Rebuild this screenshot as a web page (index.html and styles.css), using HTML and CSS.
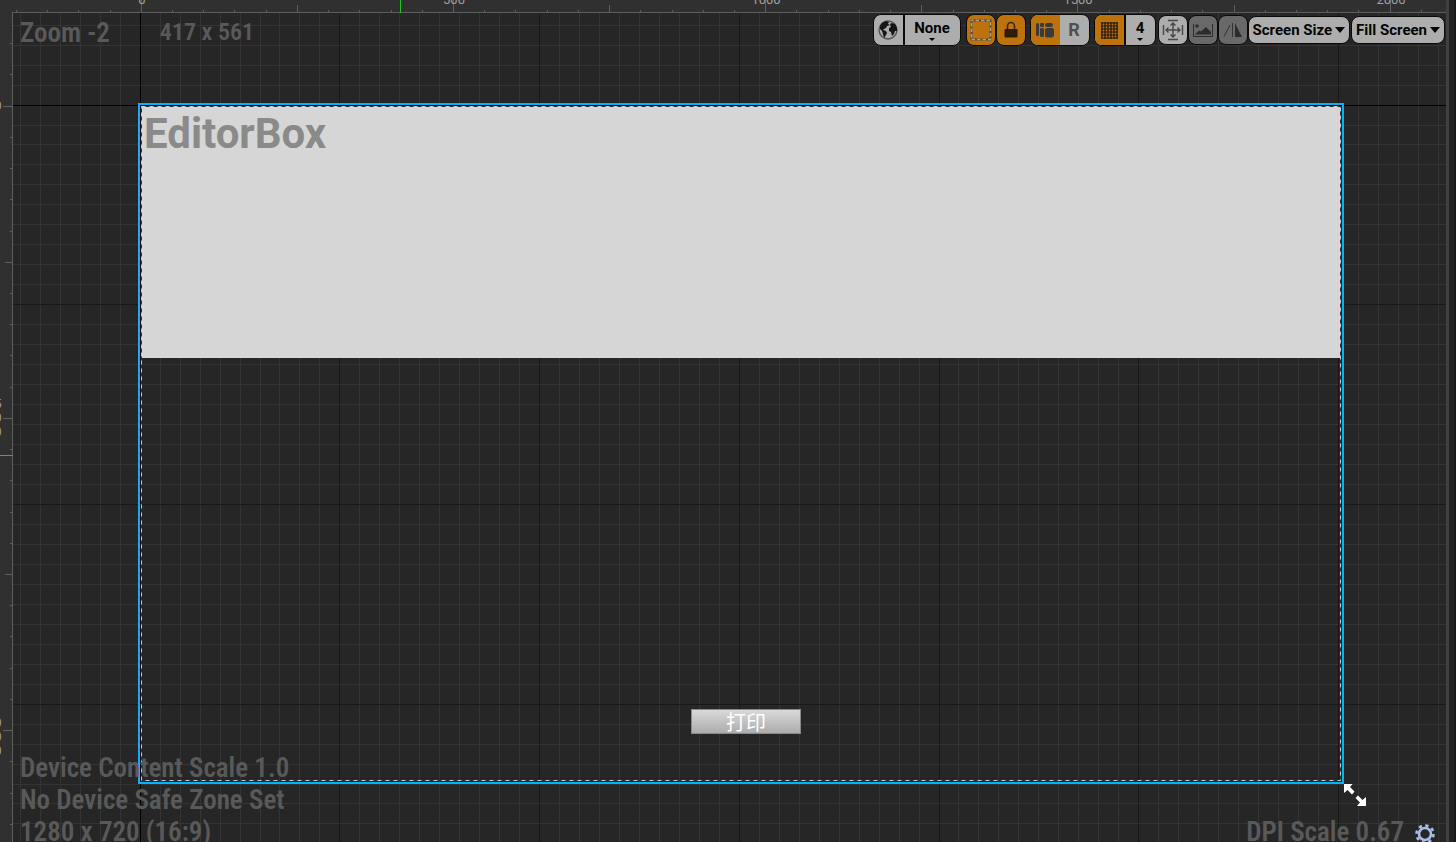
FILE: index.html
```html
<!DOCTYPE html>
<html lang="en">
<head>
<meta charset="utf-8">
<title>Widget Designer</title>
<link rel="stylesheet" href="styles.css">
</head>
<body>
<div class="designer">
  <svg class="ruler ruler-top" id="ruler-top" aria-hidden="true"></svg>
  <svg class="ruler ruler-left" id="ruler-left" aria-hidden="true"></svg>
  <main class="stage">
    <svg class="grid" id="grid" aria-hidden="true"></svg>

    <section class="widget">
      <div class="editor-box">EditorBox</div>
      <div class="action-row"><button class="print" type="button" lang="zh">打印</button></div>
      <svg class="dash" aria-hidden="true"><rect class="dash-base" x="0.500" y="0.500"/><rect class="dash-line" x="0.500" y="0.500"/></svg>
    </section>

    <header class="topbar">
      <div class="readouts"><span class="zoom">Zoom -2</span><span class="coords">417 x 561</span></div>
      <nav class="tools">
        <div class="group">
          <button class="cell" type="button" aria-label="Localization">
            <svg width="20" height="20" viewBox="0 0 20 20"><circle cx="10" cy="10" r="9" fill="#aaa" stroke="#555" stroke-width="1.400"/><path fill="#151515" d="M2 6L4 3L8 1L11 2L10 4L12 5L9 6L8 8L6 9L5 10L8 11L9 13L8 15L6 18L5 14L4 11L2 9zM13 3L17 4L19 8L19 11L17 11L16 14L14 16L13 12L11 11L11 8L13 7L12 5z"/></svg>
          </button>
          <button class="cell none" type="button"><span>None</span><i class="tiny"></i></button>
        </div>
        <button class="tool on" type="button" aria-label="Outlines">
          <svg width="22" height="22" viewBox="0 0 22 22"><path d="M1.500 1.500H20.500V20.500H1.500z" fill="none" stroke="#50493c" stroke-width="2"/><path d="M1.500 1.500H20.500V20.500H1.500z" fill="none" stroke="#a8a091" stroke-width="1.500" stroke-dasharray="3.500 2" stroke-dashoffset="1.500"/></svg>
        </button>
        <button class="tool on" type="button" aria-label="Respect locks">
          <svg width="14" height="18" viewBox="0 0 14 18"><path d="M3.500 9V5a3.500 3.500 0 0 1 7 0V9" fill="none" stroke="#3b2808" stroke-width="1.600"/><rect x="0.500" y="8" width="13" height="8.500" rx="1" fill="#2b1d08"/></svg>
        </button>
        <div class="group">
          <button class="cell on" type="button" aria-label="Flow layout">
            <svg width="20" height="18" viewBox="0 0 20 18" fill="#3c3a37"><rect x="1" y="2" width="3" height="13" rx="1.500"/><rect x="5" y="2" width="4" height="4" rx="1"/><rect x="5" y="7" width="4" height="9" rx="1"/><rect x="10" y="2" width="8" height="4" rx="2"/><rect x="10" y="7" width="9" height="9.500" rx="2"/></svg>
          </button>
          <button class="cell r" type="button">R</button>
        </div>
        <div class="group">
          <button class="cell on" type="button" aria-label="Grid snap">
            <svg width="17" height="17" viewBox="0 0 17 17"><path d="M1 0V17M4 0V17M7 0V17M10 0V17M13 0V17M16 0V17M0 1H17M0 4H17M0 7H17M0 10H17M0 13H17M0 16H17" stroke="#1e1404" stroke-width="1.200"/></svg>
          </button>
          <button class="cell four" type="button"><span>4</span><i class="tiny"></i></button>
        </div>
        <div class="views">
          <button class="tool small" type="button" aria-label="Zoom to fit">
            <svg width="22" height="22" viewBox="0 0 22 22" fill="none" stroke="#484848" stroke-width="1.400"><path d="M6 1.500H16M6 20.500H16M1.500 6V16M20.500 6V16M11 4V18M4 11H18M8.500 6.500L11 4L13.500 6.500M8.500 15.500L11 18L13.500 15.500M6.500 8.500L4 11L6.500 13.500M15.500 8.500L18 11L15.500 13.500"/></svg>
          </button>
          <button class="tool small dim" type="button" aria-label="Preview background">
            <svg width="20" height="16" viewBox="0 0 20 16"><path d="M0.500 2V14.500M19.500 2V14.500M0 14.500H20" stroke="#2c2c2c" fill="none"/><circle cx="4" cy="4" r="1.800" fill="#2c2c2c"/><path d="M2 12.500L6 8.500L8 9.500L13 5L18 10V12.500z" fill="#2c2c2c"/></svg>
          </button>
          <button class="tool small dim" type="button" aria-label="Flip">
            <svg width="20" height="16" viewBox="0 0 20 16"><path d="M1 14.500L7 3M9.500 1V15" stroke="#333" fill="none"/><path d="M12 1L19 15H12z" fill="#2c2c2c"/></svg>
          </button>
        </div>
        <button class="menu" type="button">Screen Size<i class="caret"></i></button>
        <button class="menu" type="button">Fill Screen<i class="caret"></i></button>
      </nav>
    </header>

    <div class="info"><span>Device Content Scale 1.0</span><span>No Device Safe Zone Set</span><span>1280 x 720 (16:9)</span></div>
    <div class="dpi"><span>DPI Scale 0.67</span>
      <button class="gear" type="button" aria-label="DPI settings"><svg width="20" height="20" viewBox="0 0 20 20"><circle cx="10" cy="10" r="8.500" fill="none" stroke="#a9bbe8" stroke-width="2.600" stroke-dasharray="3.300 3.376"/><circle cx="10" cy="10" r="6" fill="none" stroke="#a9bbe8" stroke-width="2.600"/></svg></button>
    </div>
    <svg class="resize" width="22" height="22" viewBox="0 0 22 22" aria-hidden="true"><path fill="#fff" d="M0 0H8.500L6 3L10.500 7.500L8 10.500L3.500 6L0 9zM14 11.500L18.500 16L22 13V22H13L16 18.500L11.500 14z"/></svg>
  </main>
  <div class="scroll"></div>
</div>
<script src="designer.js"></script>
</body>
</html>
```
FILE: styles.css
```css
* { box-sizing: border-box; }
body { margin: 0; background: #212121; font-family: Roboto, sans-serif; overflow: hidden; }
button { font: inherit; color: inherit; border: 0; padding: 0; margin: 0; background: none; }
svg { display: block; }
.designer { display: grid; grid-template: 13px 1fr / 13px 1fr 10px; height: 100vh; }
.ruler { background: #303030; overflow: hidden; width: 100%; height: 100%; font-size: 13px; fill: #a0a0a0; text-anchor: middle; shape-rendering: crispEdges; }
.ruler-top { grid-column: 1 / 3; grid-row: 1; }
.ruler-left { grid-column: 1; grid-row: 2; }
.scroll { grid-column: 3; grid-row: 1 / 3; border-left: 3px solid #404040; border-right: 2px solid #191919; background: #212121; }
.stage { position: relative; overflow: hidden; background: #262626; display: flex; flex-direction: column; }
.grid { position: absolute; inset: 0; width: 100%; height: 100%; shape-rendering: crispEdges; }
.widget { position: absolute; left: 125px; right: 102px; top: 90px; bottom: 58px; border: 2px solid #00b4ff; padding: 2px 1px 1px; display: flex; flex-direction: column; justify-content: space-between; }
.editor-box { height: 251px; background: rgba(223, 223, 223, 0.95); color: #8a8a8a; font-size: 42px; line-height: 54px; font-weight: 700; padding-left: 3px; }
.action-row { display: flex; justify-content: center; padding: 0 0 47px 10px; }
.print { width: 110px; height: 25px; border: 1px solid #898989; background: linear-gradient(#d9d9d9, #acacac); color: #fff; font-family: "Noto Sans CJK SC", sans-serif; font-size: 20px; line-height: 23px; }
.dash { position: absolute; left: 1px; top: 1px; width: calc(100% - 2px); height: calc(100% - 2px); }
.dash rect { fill: none; width: calc(100% - 1px); height: calc(100% - 1px); }
.dash-base { stroke: #303030; }
.dash-line { stroke: #cacaca; stroke-dasharray: 4 4; }
.topbar { position: relative; display: flex; justify-content: space-between; padding: 1px 1px 0 7px; }
.readouts, .info, .dpi { color: #595959; font-family: "Roboto Condensed", "Liberation Sans Narrow", Roboto, sans-serif; font-weight: 600; font-size: 27px; line-height: 32px; }
.readouts { display: flex; gap: 50px; padding-top: 3px; }
.coords { font-size: 24px; line-height: 30px; }
.tools { display: flex; align-items: flex-start; gap: 2px; font-size: 15px; font-weight: 700; color: #050505; }
.group { display: flex; height: 32px; border: 1px solid #0a0a0a; border-radius: 8px; overflow: hidden; background: #adadad; margin-left: 2px; }
.tools > .group:first-child { margin-right: 3px; }
.cell { width: 29px; display: flex; flex-direction: column; align-items: center; justify-content: center; line-height: 18px; }
.none { width: 57px; border-left: 2px solid #0a0a0a; }
.four { width: 31px; border-left: 2px solid #0a0a0a; }
.r { font-size: 18px; color: #505050; }
.on { background: #be720b; }
.tool { width: 30px; height: 32px; border: 1px solid #0a0a0a; border-radius: 8px; display: grid; place-items: center; }
.tool + .tool { margin-left: -2px; }
.views { display: flex; gap: 2px; margin-top: 1px; }
.small { height: 30px; background: #adadad; }
.dim { background: #696969; }
.menu { height: 28px; margin-top: 2px; padding: 0 4px; border: 1px solid #0a0a0a; border-radius: 8px; background: #adadad; display: flex; align-items: center; gap: 3px; }
.views + .menu { margin-left: -2px; }
.menu + .menu { margin-left: -1px; }
.caret { border: 5px solid transparent; border-top: 6px solid #050505; border-bottom: 0; }
.tiny { border: 3px solid transparent; border-top: 3px solid #050505; border-bottom: 0; margin-top: 1px; }
.info { position: absolute; left: 7px; bottom: -6px; display: flex; flex-direction: column; }
.dpi { position: absolute; right: 11px; bottom: -6px; display: flex; gap: 11px; align-items: center; }
.gear { padding-top: 4px; }
.resize { position: absolute; right: 80px; bottom: 36px; }
```
FILE: designer.js
```js
const NS = "http://www.w3.org/2000/svg";

function bar(svg, x, y, w, h, fill) {
  const r = document.createElementNS(NS, "rect");
  const a = { x, y, width: w, height: h, fill };
  for (const k in a) r.setAttribute(k, a[k]);
  svg.append(r);
}

function label(svg, x, y, text) {
  const t = document.createElementNS(NS, "text");
  t.setAttribute("x", x);
  t.setAttribute("y", y);
  t.textContent = text;
  svg.append(t);
}

const CELL = 19.97, TICK = 31.22, RULER = 13;

function gridColor(n) {
  return n === 0 ? "#000" : n % 10 === 0 ? "#181818" : "#343434";
}

function draw() {
  const grid = document.getElementById("grid");
  const top = document.getElementById("ruler-top");
  const left = document.getElementById("ruler-left");
  [grid, top, left].forEach(s => s.replaceChildren());
  const W = innerWidth, H = innerHeight;

  for (const major of [false, true]) {
    for (let n = -9; n * CELL < W; n++) {
      if ((n % 10 === 0) !== major) continue;
      bar(grid, Math.floor(140.2 + n * CELL) - RULER, 0, 1, H, gridColor(n));
      bar(grid, 0, Math.floor(105.04 + n * CELL) - RULER, W, 1, gridColor(n));
    }
  }

  const line = "#5e5e5e";
  bar(top, 12, 12, W, 1, line);
  bar(left, 12, 0, 1, H, line);
  for (let n = -4; n * TICK < W; n++) {
    const len = n % 10 === 0 ? 13 : n % 5 === 0 ? 8 : 3;
    const x = Math.floor(141.3 + n * TICK);
    const y = Math.floor(106.2 + n * TICK) - RULER;
    if (x > 12) bar(top, x, 13 - len, 1, len, line);
    const side = n % 10 === 0 ? 10 : len;
    bar(left, 13 - side, y, side, 1, line);
    if (n % 10 === 0 && n >= 0 && n * TICK < W) {
      const text = String(n * 50);
      label(top, x + 1, 4, text);
      if (y < H) [...text].forEach((c, i) => label(left, -2, y + 4 + Math.round((i - (text.length - 1) / 2) * 14), c));
    }
  }
  bar(top, 400, 0, 1, 13, "#1fc41f");
  bar(left, 0, 455 - RULER, 13, 1, "#1fc41f");
}

addEventListener("resize", draw);
draw();
```
